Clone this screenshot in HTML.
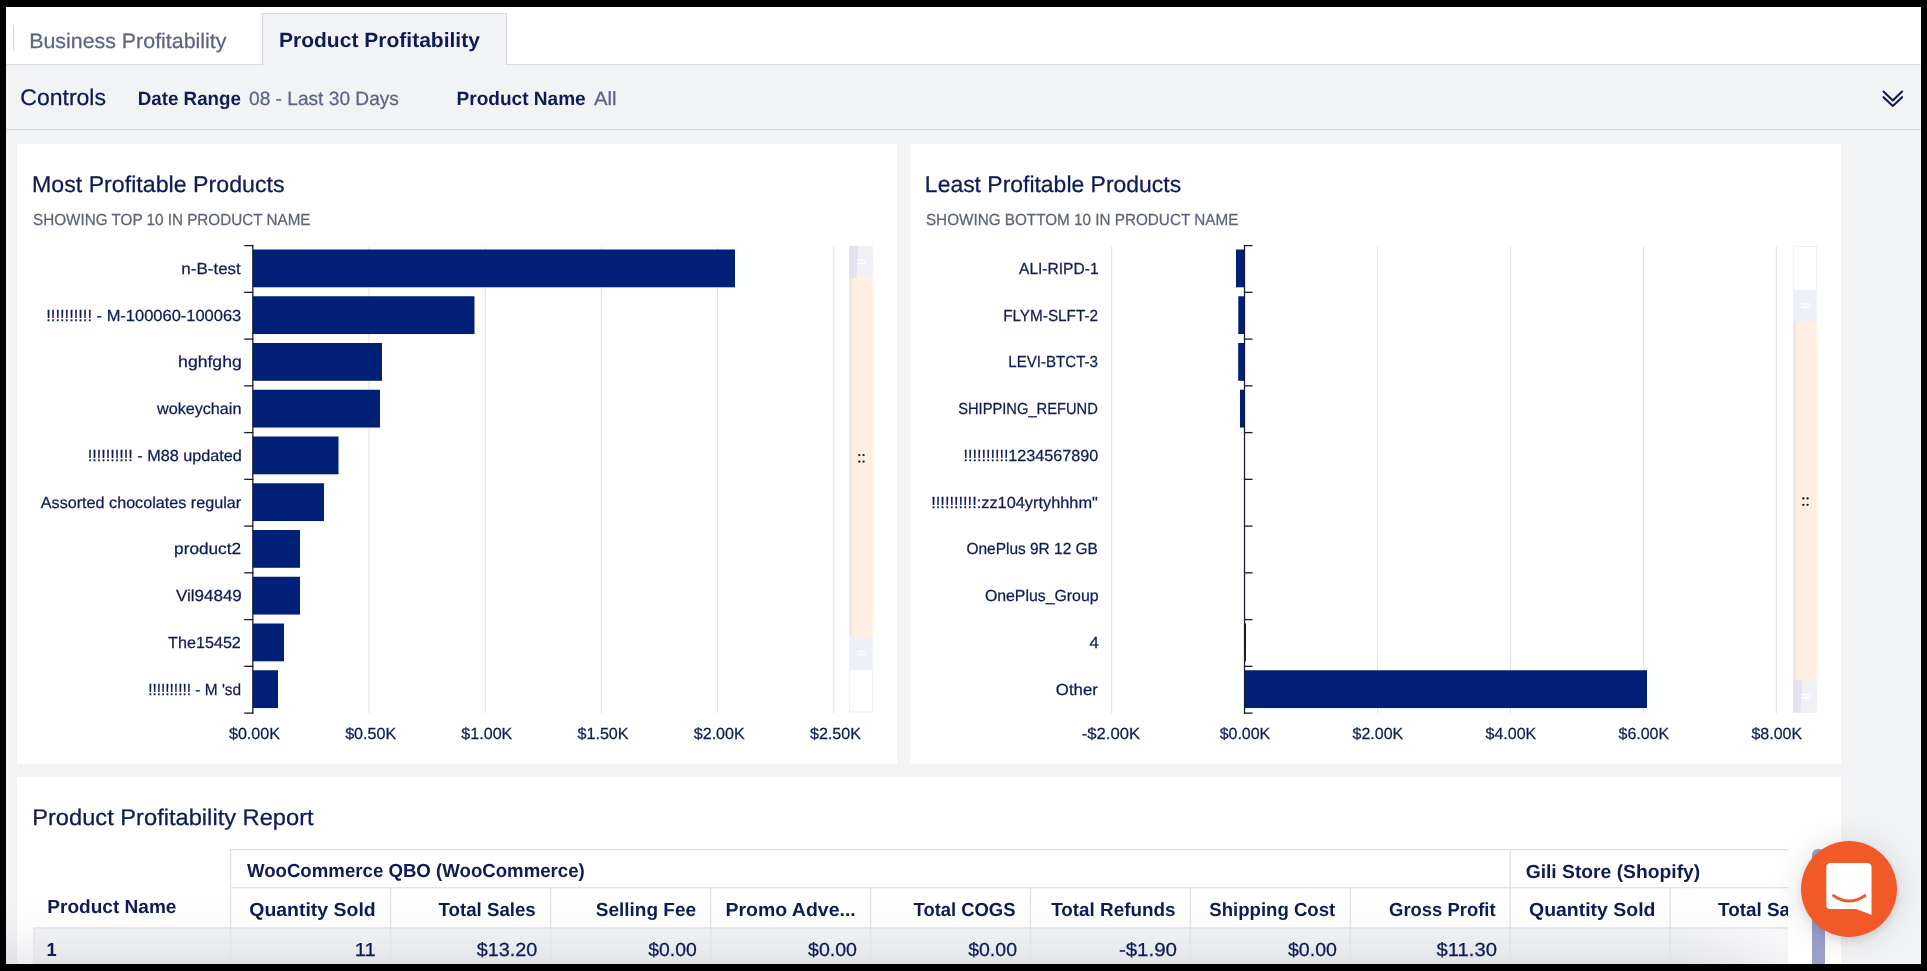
<!DOCTYPE html>
<html><head><meta charset="utf-8"><title>Product Profitability</title>
<style>
html,body{margin:0;padding:0;background:#000;width:1927px;height:971px;overflow:hidden}
body{font-family:"Liberation Sans",sans-serif;position:relative}
.abs{position:absolute}
#app{position:absolute;left:6px;top:7px;width:1915px;height:957px;background:#f2f3f5;overflow:hidden}
#tabs{position:absolute;left:0;top:0;width:1915px;height:58px;background:#fff;border-bottom:1px solid #dcdfe3;box-sizing:border-box}
#tabsep{position:absolute;left:7px;top:18px;width:1px;height:26px;background:#d6dae0}
#tabact{position:absolute;left:256px;top:6px;width:245px;height:52px;background:#f1f3f5;border:1px solid #d6dae0;border-bottom:none;box-sizing:border-box}
#controls{position:absolute;left:0;top:58px;width:1915px;height:65px;background:#f1f3f5;border-bottom:1px solid #d4d9e2;box-sizing:border-box}
.card{position:absolute;background:#fff}
svg.ov{position:absolute;left:0;top:0;will-change:transform}
svg text{font-family:"Liberation Sans",sans-serif;text-rendering:geometricPrecision}
#chat{position:absolute;left:1801px;top:841px;width:96px;height:96px;border-radius:50%;background:#f05a28;box-shadow:0 4px 10px rgba(0,0,0,0.10),0 2px 34px rgba(0,0,0,0.13)}
#vscroll{position:absolute;left:1812px;top:849px;width:13px;height:115px;background:#9aa2cb;border-radius:6px 6px 0 0}
</style></head><body>
<div id="app">
<div id="tabs"><div id="tabsep"></div><div id="tabact"></div></div>
<div id="controls"></div>
<div class="card" style="left:11px;top:137px;width:880px;height:620px"></div>
<div class="card" style="left:904px;top:137px;width:931px;height:620px"></div>
<div class="card" style="left:11px;top:770px;width:1824px;height:200px"></div>
</div>

<svg class="ov" width="1927" height="971" viewBox="0 0 1927 971">
<defs><linearGradient id="botg" x1="0" y1="0" x2="0" y2="1"><stop offset="0" stop-color="#1a2040" stop-opacity="0"/><stop offset="0.45" stop-color="#1a2040" stop-opacity="0.015"/><stop offset="1" stop-color="#1a2040" stop-opacity="0.085"/></linearGradient><linearGradient id="rfade" x1="0" y1="0" x2="1" y2="0"><stop offset="0" stop-color="#fff" stop-opacity="0"/><stop offset="1" stop-color="#fff" stop-opacity="0.55"/></linearGradient><clipPath id="tclip"><rect x="0" y="840" width="1788" height="131"/></clipPath></defs>
<path d="M1883.5 91.6 L1892.8 100.4 L1902.1 91.6 M1883.5 97.2 L1892.8 106 L1902.1 97.2" fill="none" stroke="#0d1b56" stroke-width="2.1" stroke-linecap="round" stroke-linejoin="round"/>
<rect x="368.50" y="246.6" width="1.1" height="466.5" fill="#e1e3e8"/>
<rect x="484.70" y="246.6" width="1.1" height="466.5" fill="#e1e3e8"/>
<rect x="600.90" y="246.6" width="1.1" height="466.5" fill="#e1e3e8"/>
<rect x="717.10" y="246.6" width="1.1" height="466.5" fill="#e1e3e8"/>
<rect x="833.30" y="246.6" width="1.1" height="466.5" fill="#e1e3e8"/>
<rect x="252.80" y="249.50" width="482.20" height="37.8" fill="#001f77"/>
<rect x="252.80" y="296.25" width="221.70" height="37.8" fill="#001f77"/>
<rect x="252.80" y="343.00" width="129.20" height="37.8" fill="#001f77"/>
<rect x="252.80" y="389.75" width="127.20" height="37.8" fill="#001f77"/>
<rect x="252.80" y="436.50" width="85.70" height="37.8" fill="#001f77"/>
<rect x="252.80" y="483.25" width="71.20" height="37.8" fill="#001f77"/>
<rect x="252.80" y="530.00" width="47.20" height="37.8" fill="#001f77"/>
<rect x="252.80" y="576.75" width="47.20" height="37.8" fill="#001f77"/>
<rect x="252.80" y="623.50" width="31.20" height="37.8" fill="#001f77"/>
<rect x="252.80" y="670.25" width="25.20" height="37.8" fill="#001f77"/>
<rect x="244.2" y="244.95" width="9.20" height="1.3" fill="#161b33"/>
<rect x="244.2" y="291.70" width="9.20" height="1.3" fill="#161b33"/>
<rect x="244.2" y="338.45" width="9.20" height="1.3" fill="#161b33"/>
<rect x="244.2" y="385.20" width="9.20" height="1.3" fill="#161b33"/>
<rect x="244.2" y="431.95" width="9.20" height="1.3" fill="#161b33"/>
<rect x="244.2" y="478.70" width="9.20" height="1.3" fill="#161b33"/>
<rect x="244.2" y="525.45" width="9.20" height="1.3" fill="#161b33"/>
<rect x="244.2" y="572.20" width="9.20" height="1.3" fill="#161b33"/>
<rect x="244.2" y="618.95" width="9.20" height="1.3" fill="#161b33"/>
<rect x="244.2" y="665.70" width="9.20" height="1.3" fill="#161b33"/>
<rect x="244.2" y="712.45" width="9.20" height="1.3" fill="#161b33"/>
<rect x="252.20" y="244.95" width="1.25" height="468.80" fill="#161b33"/>
<rect x="849.5" y="246.5" width="23" height="465.5" fill="#fff" stroke="#edeff3" stroke-width="1"/>
<rect x="849" y="246" width="24" height="32.3" fill="#eff1f7"/><polygon points="849,246 858.5,246 856.4,278.3 849,278.3" fill="#e1e4ee"/><rect x="857" y="259.34999999999997" width="9" height="1.4" fill="#fff"/><rect x="857" y="262.65" width="9" height="1.4" fill="#fff"/>
<rect x="849" y="278.3" width="24" height="358.7" fill="#feefe2"/>
<rect x="849" y="278.3" width="3" height="358.7" fill="#f4e6de"/>
<rect x="849" y="637" width="24" height="33" fill="#eef0f8"/><rect x="857" y="650.7" width="9" height="1.4" fill="#fff"/><rect x="857" y="654.0" width="9" height="1.4" fill="#fff"/>
<circle cx="859.3" cy="455.1" r="1.15" fill="#111"/><circle cx="859.3" cy="461.6" r="1.15" fill="#111"/><circle cx="863.6" cy="455.1" r="1.15" fill="#111"/><circle cx="863.6" cy="461.6" r="1.15" fill="#111"/>
<rect x="1111.05" y="246.6" width="1.1" height="466.5" fill="#e1e3e8"/>
<rect x="1376.95" y="246.6" width="1.1" height="466.5" fill="#e1e3e8"/>
<rect x="1509.90" y="246.6" width="1.1" height="466.5" fill="#e1e3e8"/>
<rect x="1642.85" y="246.6" width="1.1" height="466.5" fill="#e1e3e8"/>
<rect x="1775.80" y="246.6" width="1.1" height="466.5" fill="#e1e3e8"/>
<rect x="1236.00" y="249.50" width="8.50" height="37.8" fill="#001f77"/>
<rect x="1238.30" y="296.25" width="6.20" height="37.8" fill="#001f77"/>
<rect x="1238.20" y="343.00" width="6.30" height="37.8" fill="#001f77"/>
<rect x="1240.00" y="389.75" width="4.50" height="37.8" fill="#001f77"/>
<rect x="1244.50" y="623.50" width="1.50" height="37.8" fill="#001f77"/>
<rect x="1244.50" y="670.25" width="402.50" height="37.8" fill="#001f77"/>
<rect x="1243.90" y="244.95" width="8.6" height="1.3" fill="#161b33"/>
<rect x="1243.90" y="291.70" width="8.6" height="1.3" fill="#161b33"/>
<rect x="1243.90" y="338.45" width="8.6" height="1.3" fill="#161b33"/>
<rect x="1243.90" y="385.20" width="8.6" height="1.3" fill="#161b33"/>
<rect x="1243.90" y="431.95" width="8.6" height="1.3" fill="#161b33"/>
<rect x="1243.90" y="478.70" width="8.6" height="1.3" fill="#161b33"/>
<rect x="1243.90" y="525.45" width="8.6" height="1.3" fill="#161b33"/>
<rect x="1243.90" y="572.20" width="8.6" height="1.3" fill="#161b33"/>
<rect x="1243.90" y="618.95" width="8.6" height="1.3" fill="#161b33"/>
<rect x="1243.90" y="665.70" width="8.6" height="1.3" fill="#161b33"/>
<rect x="1243.90" y="712.45" width="8.6" height="1.3" fill="#161b33"/>
<rect x="1243.90" y="244.95" width="1.25" height="468.80" fill="#161b33"/>
<rect x="1793.5" y="246.5" width="23" height="466" fill="#fff" stroke="#edeff3" stroke-width="1"/>
<rect x="1793" y="290" width="24" height="32" fill="#eef0f8"/><rect x="1801" y="303.2" width="9" height="1.4" fill="#fff"/><rect x="1801" y="306.5" width="9" height="1.4" fill="#fff"/>
<rect x="1793" y="322" width="24" height="358.3" fill="#feefe2"/>
<rect x="1793" y="322" width="3" height="358.3" fill="#f4e6de"/>
<rect x="1793" y="680.3" width="24" height="32.5" fill="#eff1f7"/><polygon points="1793,680.3 1802.5,680.3 1800.4,712.8 1793,712.8" fill="#e1e4ee"/><rect x="1801" y="693.75" width="9" height="1.4" fill="#fff"/><rect x="1801" y="697.05" width="9" height="1.4" fill="#fff"/>
<circle cx="1803.3" cy="498.4" r="1.15" fill="#111"/><circle cx="1803.3" cy="504.8" r="1.15" fill="#111"/><circle cx="1807.6" cy="498.4" r="1.15" fill="#111"/><circle cx="1807.6" cy="504.8" r="1.15" fill="#111"/>
<g clip-path="url(#tclip)">
<rect x="34" y="928" width="1800" height="40" fill="#f4f5f7"/>
<rect x="6" y="896" width="1782" height="70" fill="url(#botg)"/>
<rect x="1680" y="928" width="108" height="40" fill="url(#rfade)"/>
<rect x="230" y="849" width="1600" height="1.3" fill="#dfe2e7"/>
<rect x="230" y="887" width="1600" height="1.3" fill="#dfe2e7"/>
<rect x="33.5" y="927.3" width="1800" height="1.3" fill="#dfe2e7"/>
<rect x="33.3" y="928" width="1.3" height="50" fill="#dfe2e7"/>
<rect x="229.90" y="849" width="1.3" height="131" fill="#dfe2e7"/>
<rect x="389.90" y="887" width="1.3" height="93" fill="#dfe2e7"/>
<rect x="550.00" y="887" width="1.3" height="93" fill="#dfe2e7"/>
<rect x="710.10" y="887" width="1.3" height="93" fill="#dfe2e7"/>
<rect x="869.90" y="887" width="1.3" height="93" fill="#dfe2e7"/>
<rect x="1029.80" y="887" width="1.3" height="93" fill="#dfe2e7"/>
<rect x="1189.70" y="887" width="1.3" height="93" fill="#dfe2e7"/>
<rect x="1349.70" y="887" width="1.3" height="93" fill="#dfe2e7"/>
<rect x="1509.60" y="849" width="1.3" height="131" fill="#dfe2e7"/>
<rect x="1669.60" y="887" width="1.3" height="93" fill="#dfe2e7"/>
<text x="47.39" y="913.10" font-size="18.9" font-weight="700" fill="#0d1b56" textLength="129.09" lengthAdjust="spacingAndGlyphs">Product Name</text>
<text x="246.90" y="877.30" font-size="18.9" font-weight="700" fill="#0d1b56" textLength="337.92" lengthAdjust="spacingAndGlyphs">WooCommerce QBO (WooCommerce)</text>
<text x="1525.68" y="877.50" font-size="18.9" font-weight="700" fill="#0d1b56" textLength="174.52" lengthAdjust="spacingAndGlyphs">Gili Store (Shopify)</text>
<text x="249.27" y="915.50" font-size="18.9" font-weight="700" fill="#0d1b56" textLength="126.45" lengthAdjust="spacingAndGlyphs">Quantity Sold</text>
<text x="438.50" y="915.50" font-size="18.9" font-weight="700" fill="#0d1b56" textLength="97.24" lengthAdjust="spacingAndGlyphs">Total Sales</text>
<text x="595.79" y="915.50" font-size="18.9" font-weight="700" fill="#0d1b56" textLength="100.24" lengthAdjust="spacingAndGlyphs">Selling Fee</text>
<text x="725.47" y="915.50" font-size="18.9" font-weight="700" fill="#0d1b56" textLength="130.29" lengthAdjust="spacingAndGlyphs">Promo Adve...</text>
<text x="913.50" y="915.50" font-size="18.9" font-weight="700" fill="#0d1b56" textLength="101.99" lengthAdjust="spacingAndGlyphs">Total COGS</text>
<text x="1051.20" y="915.50" font-size="18.9" font-weight="700" fill="#0d1b56" textLength="124.35" lengthAdjust="spacingAndGlyphs">Total Refunds</text>
<text x="1209.32" y="915.50" font-size="18.9" font-weight="700" fill="#0d1b56" textLength="125.91" lengthAdjust="spacingAndGlyphs">Shipping Cost</text>
<text x="1389.12" y="915.50" font-size="18.9" font-weight="700" fill="#0d1b56" textLength="106.44" lengthAdjust="spacingAndGlyphs">Gross Profit</text>
<text x="1529.07" y="915.50" font-size="18.9" font-weight="700" fill="#0d1b56" textLength="126.35" lengthAdjust="spacingAndGlyphs">Quantity Sold</text>
<text x="1718.00" y="915.50" font-size="18.9" font-weight="700" fill="#0d1b56" textLength="98.24" lengthAdjust="spacingAndGlyphs">Total Sales</text>
<text x="46.43" y="955.80" font-size="18.9" font-weight="700" fill="#0d1b56" textLength="10.17" lengthAdjust="spacingAndGlyphs">1</text>
<text x="354.72" y="955.60" font-size="18.9" fill="#0d1b56" stroke="#0d1b56" stroke-width="0.25" textLength="21.26" lengthAdjust="spacingAndGlyphs">11</text>
<text x="476.70" y="955.60" font-size="18.9" fill="#0d1b56" stroke="#0d1b56" stroke-width="0.25" textLength="60.62" lengthAdjust="spacingAndGlyphs">$13.20</text>
<text x="648.30" y="955.60" font-size="18.9" fill="#0d1b56" stroke="#0d1b56" stroke-width="0.25" textLength="48.49" lengthAdjust="spacingAndGlyphs">$0.00</text>
<text x="808.00" y="955.60" font-size="18.9" fill="#0d1b56" stroke="#0d1b56" stroke-width="0.25" textLength="48.99" lengthAdjust="spacingAndGlyphs">$0.00</text>
<text x="968.20" y="955.60" font-size="18.9" fill="#0d1b56" stroke="#0d1b56" stroke-width="0.25" textLength="48.79" lengthAdjust="spacingAndGlyphs">$0.00</text>
<text x="1118.92" y="955.60" font-size="18.9" fill="#0d1b56" stroke="#0d1b56" stroke-width="0.25" textLength="58.11" lengthAdjust="spacingAndGlyphs">-$1.90</text>
<text x="1288.00" y="955.60" font-size="18.9" fill="#0d1b56" stroke="#0d1b56" stroke-width="0.25" textLength="48.89" lengthAdjust="spacingAndGlyphs">$0.00</text>
<text x="1436.50" y="955.60" font-size="18.9" fill="#0d1b56" stroke="#0d1b56" stroke-width="0.25" textLength="60.42" lengthAdjust="spacingAndGlyphs">$11.30</text>
</g>
<text x="29.16" y="48.00" font-size="21" fill="#5d6586" stroke="#5d6586" stroke-width="0.25" textLength="197.28" lengthAdjust="spacingAndGlyphs">Business Profitability</text>
<text x="278.98" y="47.40" font-size="20.6" font-weight="700" fill="#0d1b56" textLength="200.93" lengthAdjust="spacingAndGlyphs">Product Profitability</text>
<text x="20.29" y="105.20" font-size="22.7" fill="#0d1b56" stroke="#0d1b56" stroke-width="0.25" textLength="85.71" lengthAdjust="spacingAndGlyphs">Controls</text>
<text x="137.73" y="104.90" font-size="19.3" font-weight="700" fill="#0d1b56" textLength="103.25" lengthAdjust="spacingAndGlyphs">Date Range</text>
<text x="249.01" y="104.90" font-size="19.3" fill="#5d6586" stroke="#5d6586" stroke-width="0.25" textLength="149.92" lengthAdjust="spacingAndGlyphs">08 - Last 30 Days</text>
<text x="456.51" y="104.90" font-size="19.3" font-weight="700" fill="#0d1b56" textLength="129.20" lengthAdjust="spacingAndGlyphs">Product Name</text>
<text x="594.00" y="104.90" font-size="19.3" fill="#5d6586" stroke="#5d6586" stroke-width="0.25" textLength="22.56" lengthAdjust="spacingAndGlyphs">All</text>
<text x="31.97" y="191.50" font-size="22.8" fill="#0d1b56" stroke="#0d1b56" stroke-width="0.25" textLength="252.58" lengthAdjust="spacingAndGlyphs">Most Profitable Products</text>
<text x="33.05" y="225.00" font-size="16" fill="#5d637b" stroke="#5d637b" stroke-width="0.25" textLength="277.45" lengthAdjust="spacingAndGlyphs">SHOWING TOP 10 IN PRODUCT NAME</text>
<text x="924.89" y="191.50" font-size="22.8" fill="#0d1b56" stroke="#0d1b56" stroke-width="0.25" textLength="256.23" lengthAdjust="spacingAndGlyphs">Least Profitable Products</text>
<text x="925.95" y="224.80" font-size="16" fill="#5d637b" stroke="#5d637b" stroke-width="0.25" textLength="312.37" lengthAdjust="spacingAndGlyphs">SHOWING BOTTOM 10 IN PRODUCT NAME</text>
<text x="181.34" y="273.88" font-size="16" fill="#0d1b56" stroke="#0d1b56" stroke-width="0.25" textLength="59.48" lengthAdjust="spacingAndGlyphs">n-B-test</text>
<text x="46.27" y="320.62" font-size="16" fill="#0d1b56" stroke="#0d1b56" stroke-width="0.25" textLength="194.98" lengthAdjust="spacingAndGlyphs">!!!!!!!!!! - M-100060-100063</text>
<text x="178.10" y="367.38" font-size="16" fill="#0d1b56" stroke="#0d1b56" stroke-width="0.25" textLength="63.63" lengthAdjust="spacingAndGlyphs">hghfghg</text>
<text x="157.00" y="414.12" font-size="16" fill="#0d1b56" stroke="#0d1b56" stroke-width="0.25" textLength="84.42" lengthAdjust="spacingAndGlyphs">wokeychain</text>
<text x="87.69" y="460.88" font-size="16" fill="#0d1b56" stroke="#0d1b56" stroke-width="0.25" textLength="154.21" lengthAdjust="spacingAndGlyphs">!!!!!!!!!! - M88 updated</text>
<text x="40.80" y="507.62" font-size="16" fill="#0d1b56" stroke="#0d1b56" stroke-width="0.25" textLength="200.33" lengthAdjust="spacingAndGlyphs">Assorted chocolates regular</text>
<text x="174.12" y="554.38" font-size="16" fill="#0d1b56" stroke="#0d1b56" stroke-width="0.25" textLength="66.96" lengthAdjust="spacingAndGlyphs">product2</text>
<text x="175.90" y="601.12" font-size="16" fill="#0d1b56" stroke="#0d1b56" stroke-width="0.25" textLength="65.95" lengthAdjust="spacingAndGlyphs">Vil94849</text>
<text x="168.10" y="647.88" font-size="16" fill="#0d1b56" stroke="#0d1b56" stroke-width="0.25" textLength="72.76" lengthAdjust="spacingAndGlyphs">The15452</text>
<text x="148.13" y="694.62" font-size="16" fill="#0d1b56" stroke="#0d1b56" stroke-width="0.25" textLength="93.06" lengthAdjust="spacingAndGlyphs">!!!!!!!!!! - M 'sd</text>
<text x="1019.00" y="273.88" font-size="16" fill="#0d1b56" stroke="#0d1b56" stroke-width="0.25" textLength="79.58" lengthAdjust="spacingAndGlyphs">ALI-RIPD-1</text>
<text x="1003.14" y="320.62" font-size="16" fill="#0d1b56" stroke="#0d1b56" stroke-width="0.25" textLength="94.93" lengthAdjust="spacingAndGlyphs">FLYM-SLFT-2</text>
<text x="1008.36" y="367.38" font-size="16" fill="#0d1b56" stroke="#0d1b56" stroke-width="0.25" textLength="89.57" lengthAdjust="spacingAndGlyphs">LEVI-BTCT-3</text>
<text x="958.18" y="414.12" font-size="16" fill="#0d1b56" stroke="#0d1b56" stroke-width="0.25" textLength="139.65" lengthAdjust="spacingAndGlyphs">SHIPPING_REFUND</text>
<text x="963.49" y="460.88" font-size="16" fill="#0d1b56" stroke="#0d1b56" stroke-width="0.25" textLength="134.75" lengthAdjust="spacingAndGlyphs">!!!!!!!!!!1234567890</text>
<text x="931.28" y="507.62" font-size="16" fill="#0d1b56" stroke="#0d1b56" stroke-width="0.25" textLength="166.60" lengthAdjust="spacingAndGlyphs">!!!!!!!!!!:zz104yrtyhhhm&quot;</text>
<text x="966.43" y="554.38" font-size="16" fill="#0d1b56" stroke="#0d1b56" stroke-width="0.25" textLength="131.44" lengthAdjust="spacingAndGlyphs">OnePlus 9R 12 GB</text>
<text x="984.91" y="601.12" font-size="16" fill="#0d1b56" stroke="#0d1b56" stroke-width="0.25" textLength="113.62" lengthAdjust="spacingAndGlyphs">OnePlus_Group</text>
<text x="1089.40" y="647.88" font-size="16" fill="#0d1b56" stroke="#0d1b56" stroke-width="0.25" textLength="9.35" lengthAdjust="spacingAndGlyphs">4</text>
<text x="1055.85" y="694.62" font-size="16" fill="#0d1b56" stroke="#0d1b56" stroke-width="0.25" textLength="41.97" lengthAdjust="spacingAndGlyphs">Other</text>
<text x="228.95" y="738.70" font-size="16" fill="#0d1b56" stroke="#0d1b56" stroke-width="0.25" textLength="51.02" lengthAdjust="spacingAndGlyphs">$0.00K</text>
<text x="345.15" y="738.70" font-size="16" fill="#0d1b56" stroke="#0d1b56" stroke-width="0.25" textLength="51.02" lengthAdjust="spacingAndGlyphs">$0.50K</text>
<text x="461.35" y="738.70" font-size="16" fill="#0d1b56" stroke="#0d1b56" stroke-width="0.25" textLength="51.02" lengthAdjust="spacingAndGlyphs">$1.00K</text>
<text x="577.55" y="738.70" font-size="16" fill="#0d1b56" stroke="#0d1b56" stroke-width="0.25" textLength="51.02" lengthAdjust="spacingAndGlyphs">$1.50K</text>
<text x="693.75" y="738.70" font-size="16" fill="#0d1b56" stroke="#0d1b56" stroke-width="0.25" textLength="51.02" lengthAdjust="spacingAndGlyphs">$2.00K</text>
<text x="809.95" y="738.70" font-size="16" fill="#0d1b56" stroke="#0d1b56" stroke-width="0.25" textLength="51.02" lengthAdjust="spacingAndGlyphs">$2.50K</text>
<text x="1081.76" y="738.70" font-size="16" fill="#0d1b56" stroke="#0d1b56" stroke-width="0.25" textLength="58.29" lengthAdjust="spacingAndGlyphs">-$2.00K</text>
<text x="1219.65" y="738.70" font-size="16" fill="#0d1b56" stroke="#0d1b56" stroke-width="0.25" textLength="50.62" lengthAdjust="spacingAndGlyphs">$0.00K</text>
<text x="1352.60" y="738.70" font-size="16" fill="#0d1b56" stroke="#0d1b56" stroke-width="0.25" textLength="50.62" lengthAdjust="spacingAndGlyphs">$2.00K</text>
<text x="1485.55" y="738.70" font-size="16" fill="#0d1b56" stroke="#0d1b56" stroke-width="0.25" textLength="50.62" lengthAdjust="spacingAndGlyphs">$4.00K</text>
<text x="1618.50" y="738.70" font-size="16" fill="#0d1b56" stroke="#0d1b56" stroke-width="0.25" textLength="50.62" lengthAdjust="spacingAndGlyphs">$6.00K</text>
<text x="1751.45" y="738.70" font-size="16" fill="#0d1b56" stroke="#0d1b56" stroke-width="0.25" textLength="50.62" lengthAdjust="spacingAndGlyphs">$8.00K</text>
<text x="32.21" y="824.90" font-size="22.7" fill="#0d1b56" stroke="#0d1b56" stroke-width="0.25" textLength="281.44" lengthAdjust="spacingAndGlyphs">Product Profitability Report</text>
</svg>
<div id="vscroll"></div>
<div id="chat"><svg width="96" height="96" viewBox="0 0 96 96" style="position:absolute;left:0;top:0">
<path d="M29.5 22 H66 Q70.5 22 70.5 26.5 V73.8 L55 68 H29.5 Q25.3 68 25.3 63.8 V26.5 Q25.3 22 29.5 22 Z" fill="#fff"/>
<path d="M32.6 54.7 Q48.2 65.2 63.8 54.7" fill="none" stroke="#f05a28" stroke-width="3" stroke-linecap="round"/>
</svg></div>
<div class="abs" style="left:0;top:964px;width:1927px;height:7px;background:#000"></div>
</body></html>
